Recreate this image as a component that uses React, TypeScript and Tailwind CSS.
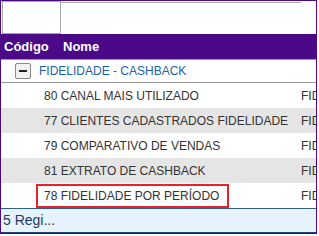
import React from 'react';

type Row = { id: number; name: string; group: string };

const rows: Row[] = [
  { id: 80, name: 'CANAL MAIS UTILIZADO', group: 'FIDELIDADE - CASHBACK' },
  { id: 77, name: 'CLIENTES CADASTRADOS FIDELIDADE', group: 'FIDELIDADE - CASHBACK' },
  { id: 79, name: 'COMPARATIVO DE VENDAS', group: 'FIDELIDADE - CASHBACK' },
  { id: 81, name: 'EXTRATO DE CASHBACK', group: 'FIDELIDADE - CASHBACK' },
  { id: 78, name: 'FIDELIDADE POR PERÍODO', group: 'FIDELIDADE - CASHBACK' },
];

export default function App() {
  return (
    <div className="w-[319px] h-[236px] bg-white font-['Liberation_Sans',Arial,sans-serif]">
      <div className="w-[317px] h-[234px] border border-[#4b0887] flex flex-col overflow-hidden">
        {/* filter row */}
        <div className="h-[33px] flex pl-px">
          <div className="w-[59px] h-[33px] border border-[#a8a8a8]" />
          <div className="w-[240px] h-[33px] border-y border-[#a8a8a8] mt-px" />
        </div>

        {/* header */}
        <div className="h-[26px] bg-[#4b0887] border-b border-[#9a9a9a] flex items-center text-white font-bold text-[13px]">
          <span className="pl-[3px] w-[62px]">Código</span>
          <span>Nome</span>
        </div>

        {/* group */}
        <div className="h-[23px] border-b border-[#9a9a9a] flex items-center">
          <div className="ml-[14px] w-[16px] h-[16px] border border-[#8a8a8a] rounded-[2px] bg-[#f2f2f2] flex items-center justify-center">
            <div className="w-[8px] h-[2px] bg-[#222]" />
          </div>
          <span className="ml-[8px] text-[12px] text-[#1d5fa6]">FIDELIDADE - CASHBACK</span>
        </div>

        {/* rows */}
        {rows.map((r, i) => (
          <div
            key={r.id}
            className={`h-[25px] flex items-center text-[12px] text-[#333] ${i % 2 === 1 ? 'bg-[#e5e5e5]' : 'bg-white'}`}
          >
            <div className="w-[300px] shrink-0 pl-[35px] flex items-center h-full">
              <span
                className={`h-[24px] flex items-center px-[6px] ${i === 4 ? 'border-2 border-[#e8212b] pr-[8px]' : 'border-2 border-transparent'}`}
              >
                {r.id} {r.name}
              </span>
            </div>
            <span className="whitespace-nowrap">{r.group}</span>
          </div>
        ))}

        {/* footer */}
        <div className="flex-1 bg-[#e6f3fc] border-t border-[#2d5f8f] border-b border-b-[#1c3f70] flex items-center pl-[2px] text-[14px] text-[#1f3a60]">
          5 Regi...
        </div>
      </div>
    </div>
  );
}
